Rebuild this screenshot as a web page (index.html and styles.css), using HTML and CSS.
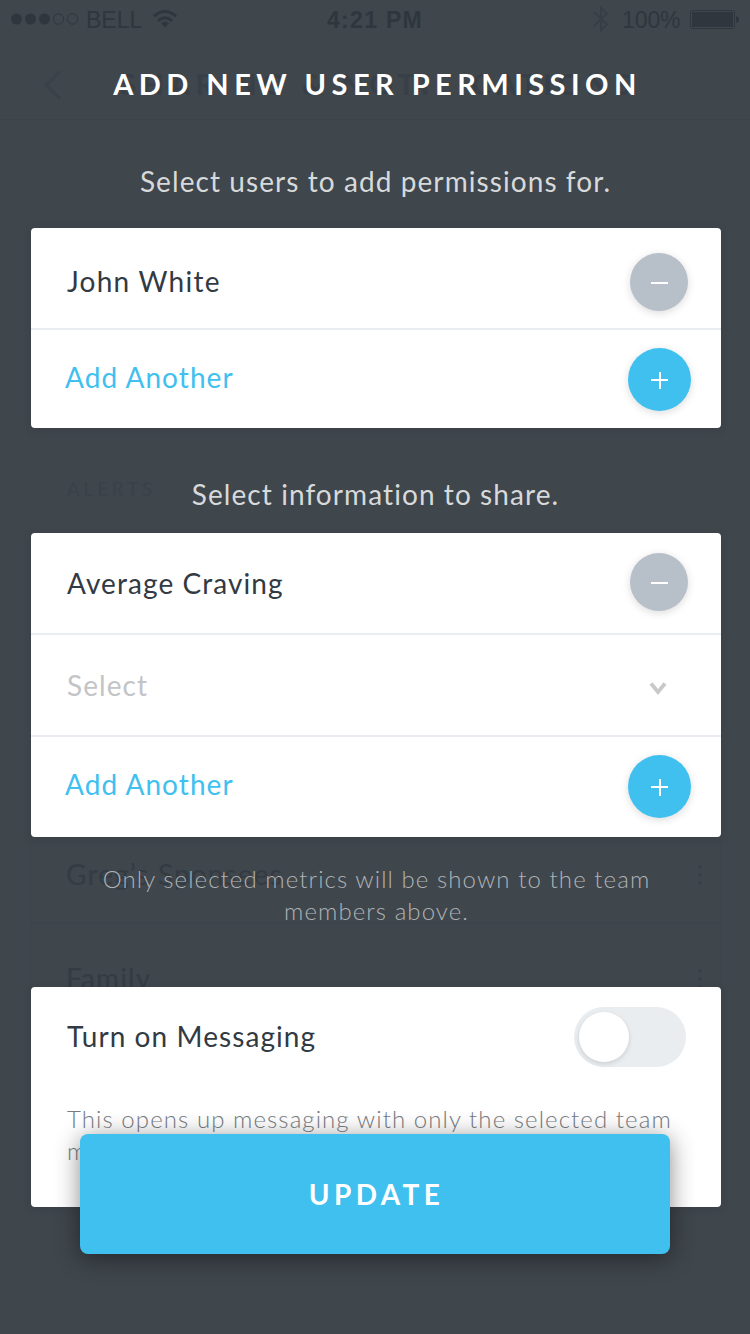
FILE: index.html
```html
<!DOCTYPE html>
<html lang="en">
<head>
  <meta charset="utf-8">
  <title>Add New User Permission</title>
  <link rel="stylesheet" href="styles.css">
</head>
<body>
<div class="screen">

  <!-- Dimmed page behind the modal -->
  <div class="backdrop" aria-hidden="true">
    <div class="statusbar">
      <svg class="signal" width="68" height="12" viewBox="0 0 68 12">
        <g fill="currentColor"><circle cx="5.500" cy="6" r="5.500"/><circle cx="19.500" cy="6" r="5.500"/><circle cx="33.500" cy="6" r="5.500"/></g>
        <g fill="none" stroke="currentColor"><circle cx="47.500" cy="6" r="5.200"/><circle cx="61.500" cy="6" r="5.200"/></g>
      </svg>
      <span class="carrier">BELL</span>
      <svg class="wifi" width="24" height="18" viewBox="0 0 24 18">
        <g fill="none" stroke="currentColor" stroke-width="3"><path d="M1 6.200Q12-3.200 23 6.200"/><path d="M5 10.800Q12 4.800 19 10.800"/></g>
        <path d="M7.800 13.200Q12 10 16.200 13.200L12 17.600Z" fill="currentColor"/>
      </svg>
      <span class="clock">4:21 PM</span>
      <svg class="bluetooth" width="16" height="26" viewBox="0 0 16 26">
        <path d="M1 6L14 18.500L8 24.500V1.500L14 7.500L1 20" fill="none" stroke="currentColor" stroke-width="1.800"/>
      </svg>
      <span class="percent">100%</span>
      <svg class="battery" width="49" height="20" viewBox="0 0 49 20">
        <rect x=".5" y=".5" width="44" height="18" rx="2.500" fill="none" stroke="currentColor"/>
        <rect x="2" y="2" width="41" height="15" rx="1.500" fill="currentColor"/>
        <path d="M46 6Q49 6.500 49 9.500T46 13Z" fill="currentColor"/>
      </svg>
    </div>
    <div class="navbar">
      <svg class="back" width="20" height="30" viewBox="0 0 20 30"><path d="M17 1.500L3 15L17 28.500" fill="none" stroke="currentColor" stroke-width="3"/></svg>
      <span class="nav-title">SHARING &amp; NOTIFICATIONS</span>
    </div>
    <div class="alerts-label">ALERTS</div>
    <div class="group-list">
      <div class="group">Greg’s Sponsees<svg width="6" height="22" viewBox="0 0 6 22" fill="currentColor"><circle cx="3" cy="3" r="2"/><circle cx="3" cy="11" r="2"/><circle cx="3" cy="19" r="2"/></svg></div>
      <div class="group">Family<svg width="6" height="22" viewBox="0 0 6 22" fill="currentColor"><circle cx="3" cy="3" r="2"/><circle cx="3" cy="11" r="2"/><circle cx="3" cy="19" r="2"/></svg></div>
    </div>
  </div>

  <main class="modal">
    <h1 class="title">ADD NEW USER PERMISSION</h1>

    <p class="lead lead-users">Select users to add permissions for.</p>
    <section class="card">
      <div class="row row-user">
        <span class="label">John White</span>
        <button class="round remove" aria-label="Remove"><svg width="58" height="58" viewBox="0 0 58 58"><path d="M21 30H38" stroke="#fff" stroke-width="2"/></svg></button>
      </div>
      <div class="row row-add">
        <span class="label">Add Another</span>
        <button class="round add" aria-label="Add"><svg width="63" height="63" viewBox="0 0 63 63"><path d="M23 32H40M32 24V41" stroke="#fff" stroke-width="2"/></svg></button>
      </div>
    </section>

    <p class="lead lead-info">Select information to share.</p>
    <section class="card">
      <div class="row row-metric">
        <span class="label">Average Craving</span>
        <button class="round remove" aria-label="Remove"><svg width="58" height="58" viewBox="0 0 58 58"><path d="M21 30H38" stroke="#fff" stroke-width="2"/></svg></button>
      </div>
      <div class="row row-select">
        <span class="label">Select</span>
        <svg class="chevron" width="18" height="14" viewBox="0 0 18 14"><path d="M2 1.500L9 10L16 1.500" fill="none" stroke="#c9c9c9" stroke-width="3.800"/></svg>
      </div>
      <div class="row row-add">
        <span class="label">Add Another</span>
        <button class="round add" aria-label="Add"><svg width="63" height="63" viewBox="0 0 63 63"><path d="M23 32H40M32 24V41" stroke="#fff" stroke-width="2"/></svg></button>
      </div>
    </section>

    <p class="note">Only selected metrics will be shown to the team<br>members above.</p>

    <section class="card messaging">
      <div class="messaging-head">
        <span class="label">Turn on Messaging</span>
        <span class="toggle" role="switch" aria-checked="false"><span class="knob"></span></span>
      </div>
      <p class="hint">This opens up messaging with only the selected team<br>members above.</p>
    </section>

    <button class="update">UPDATE</button>
  </main>
</div>
</body>
</html>
```
FILE: styles.css
```css
* { box-sizing: border-box; }

body {
  margin: 0;
  background: #3f464c;
  font-family: Lato, "Open Sans", sans-serif;
}

h1, p { margin: 0; font-weight: 400; }
svg { display: block; flex: none; }

button {
  padding: 0;
  border: 0;
  font: inherit;
}

.screen {
  position: relative;
  width: 750px;
  height: 1334px;
  overflow: hidden;
  background: #3f464c;
  white-space: nowrap;
}

/* Dimmed page */
.backdrop {
  position: absolute;
  inset: 0;
  color: #343b43;
}

.statusbar {
  display: flex;
  align-items: flex-start;
  height: 40px;
  padding-left: 11px;
  color: #2f363e;
  font: 23px/26px "Liberation Sans", Arial, sans-serif;
}

.signal { margin-top: 13px; }
.carrier { width: 65px; margin: 7px 0 0 7px; letter-spacing: 0; }
.wifi { margin-top: 10px; margin-left: 2px; }
.clock { width: 98px; margin: 7px 0 0 150px; font-weight: 700; letter-spacing: 1.300px; }
.bluetooth { margin: 6px 0 0 168px; color: #373e46; }
.percent { width: 59px; margin: 7px 0 0 13px; letter-spacing: -0.100px; }
.battery { margin: 10px 0 0 9px; }

.navbar {
  display: flex;
  height: 80px;
  padding: 28px 0 0 43px;
  border-bottom: 1px solid #3e434a;
  color: #383f47;
}

.back { margin-top: 2px; color: #3a4148; }
.nav-title {
  margin-left: 57px;
  font-size: 29px;
  line-height: 32px;
  font-weight: 700;
  letter-spacing: 5.700px;
}

.alerts-label {
  margin: 353px 0 0 67px;
  color: #3a4148;
  font-size: 19px;
  line-height: 32px;
  letter-spacing: 3.760px;
}

.group-list { margin: 315px 29px 0 30px; }
.group {
  display: flex;
  justify-content: space-between;
  align-items: flex-start;
  height: 104px;
  padding: 37px 17px 0 35px;
  border: 1px solid #3e444b;
  border-bottom-width: 2px;
  font-size: 28px;
  line-height: 32px;
  letter-spacing: 1.150px;
}
.group svg { margin-top: 6px; color: #3a4047; }

/* Modal */
.modal {
  position: relative;
  display: flex;
  flex-direction: column;
  align-items: center;
  padding-top: 68px;
  font-size: 28px;
  line-height: 32px;
  letter-spacing: 1.080px;
}

.title {
  padding-left: 5px;
  color: #fff;
  font-size: 29px;
  line-height: 32px;
  font-weight: 700;
  letter-spacing: 5.460px;
}

.lead { color: #d8d9da; padding-left: 1px; }
.lead-users { margin-top: 65px; }
.lead-info { margin-top: 50px; }

.card {
  width: 690px;
  margin-left: 2px;
  border-radius: 4px;
  background: #fff;
  box-shadow: 0 2px 8px rgba(50, 35, 45, 0.15);
  color: #323a43;
}
.lead-users + .card { margin-top: 31px; }
.lead-info + .card { margin-top: 23px; }

.row {
  display: flex;
  justify-content: space-between;
  align-items: flex-start;
  height: 102px;
  padding: 0 33px 0 36px;
  border-bottom: 2px solid #e9edf1;
}
.row-user .label { margin-top: 37px; letter-spacing: 1.250px; }
.row-user .round { margin-top: 25px; }
.row-metric .label { margin-top: 34px; }
.row-metric .round { margin-top: 20px; }
.row-select .label { margin-top: 34px; color: #c3c4c6; }

.row-add {
  height: 98px;
  padding: 18px 30px 0 34px;
  border-bottom: 0;
  color: #3fc0ef;
  letter-spacing: 1.060px;
}
.row-add .label { margin-top: 13px; }
.row-select + .row-add { height: 100px; }

.chevron { margin: 47px 21px 0 0; }

.round {
  border-radius: 50%;
  box-shadow: 0 2px 8px rgba(0, 0, 0, 0.14);
}
.remove { background: #b7bfc9; }
.add { background: #3fc0ef; }

.note, .hint {
  font-size: 24px;
  line-height: 32px;
  font-weight: 300;
}
.note {
  margin-top: 26px;
  padding-left: 3px;
  color: #b0b3b6;
  text-align: center;
}

.messaging {
  height: 220px;
  margin-top: 60px;
  padding: 20px 35px 0 36px;
}
.messaging-head { display: flex; justify-content: space-between; }
.messaging-head .label { margin-top: 13px; }

.toggle {
  width: 112px;
  height: 60px;
  padding: 5px;
  border-radius: 30px;
  background: #e9edf0;
}
.knob {
  display: block;
  width: 50px;
  height: 50px;
  border-radius: 50%;
  background: #fff;
  box-shadow: 0 2px 5px rgba(0, 0, 0, 0.12);
}

.hint { margin-top: 36px; color: #787c81; }

/* Floats over the bottom of the messaging card */
.update {
  position: absolute;
  top: 1134px;
  left: 80px;
  width: 590px;
  height: 120px;
  padding-left: 3px;
  border-radius: 8px;
  background: #3fc0ef;
  box-shadow: 0 4px 24px rgba(0, 0, 0, 0.46);
  color: #fff;
  font-weight: 700;
  letter-spacing: 4.350px;
}
```
